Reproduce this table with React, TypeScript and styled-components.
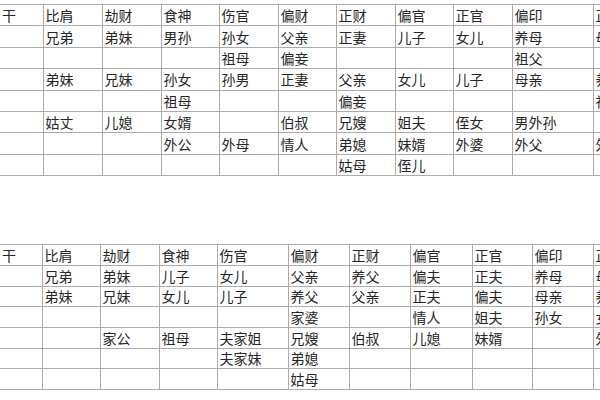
import styled, { createGlobalStyle } from 'styled-components'

const GlobalStyle = createGlobalStyle`
  html, body {
    margin: 0;
    padding: 0;
    background: #ffffff;
    overflow: hidden;
  }
`

const Page = styled.div`
  width: 600px;
  height: 400px;
  overflow: hidden;
  font-family: "Noto Sans CJK SC", "DejaVu Sans", sans-serif;
  color: #262626;
`

const Table = styled.table<{ $top: number; $rowH: number; $width: number }>`
  border-collapse: collapse;
  table-layout: fixed;
  width: ${p => p.$width}px;
  margin-top: ${p => p.$top}px;
  font-size: 14px;

  td {
    height: ${p => p.$rowH}px;
  }
`

const Col = styled.col<{ $w: number }>`
  width: ${p => p.$w}px;
`

const Cell = styled.td`
  border: 1px solid #ababab;
  border-left: none;
  padding: 0 0 0 2px;
  line-height: 1;
  white-space: nowrap;
  overflow: hidden;
  vertical-align: middle;

  & + & {
    border-left: 1px solid #ababab;
  }
`

const HEAD = ['干', '比肩', '劫财', '食神', '伤官', '偏财', '正财', '偏官', '正官', '偏印', '正印']

const TABLE_ONE = [
  HEAD,
  ['', '兄弟', '弟妹', '男孙', '孙女', '父亲', '正妻', '儿子', '女儿', '养母', '母亲'],
  ['', '', '', '', '祖母', '偏妾', '', '', '', '祖父', ''],
  ['', '弟妹', '兄妹', '孙女', '孙男', '正妻', '父亲', '女儿', '儿子', '母亲', '养母'],
  ['', '', '', '祖母', '', '', '偏妾', '', '', '', '祖父'],
  ['', '姑丈', '儿媳', '女婿', '', '伯叔', '兄嫂', '姐夫', '侄女', '男外孙', ''],
  ['', '', '', '外公', '外母', '情人', '弟媳', '妹婿', '外婆', '外父', '外公'],
  ['', '', '', '', '', '', '姑母', '侄儿', '', '', ''],
]

const TABLE_TWO = [
  HEAD,
  ['', '兄弟', '弟妹', '儿子', '女儿', '父亲', '养父', '偏夫', '正夫', '养母', '母亲'],
  ['', '弟妹', '兄妹', '女儿', '儿子', '养父', '父亲', '正夫', '偏夫', '母亲', '养母'],
  ['', '', '', '', '', '家婆', '', '情人', '姐夫', '孙女', '女婿'],
  ['', '', '家公', '祖母', '夫家姐', '兄嫂', '伯叔', '儿媳', '妹婿', '', '外孙'],
  ['', '', '', '', '夫家妹', '弟媳', '', '', '', '', ''],
  ['', '', '', '', '', '姑母', '', '', '', '', ''],
]

const COLS_ONE = [43, 59, 59, 58, 59, 58, 59, 58, 59, 81, 7]
const COLS_TWO = [42, 58, 59, 58, 71, 61, 61, 62, 60, 61, 7]

function Grid({ rows, cols, top, rowH }: { rows: string[][]; cols: number[]; top: number; rowH: number }) {
  const width = cols.reduce((a, b) => a + b, 0)
  return (
    <Table $top={top} $rowH={rowH} $width={width}>
      <colgroup>
        {cols.map((w, i) => (
          <Col key={i} $w={w} />
        ))}
      </colgroup>
      <tbody>
        {rows.map((row, r) => (
          <tr key={r}>
            {row.map((text, c) => (
              <Cell key={c}>{text}</Cell>
            ))}
          </tr>
        ))}
      </tbody>
    </Table>
  )
}

export default function App() {
  return (
    <Page>
      <GlobalStyle />
      <Grid rows={TABLE_ONE} cols={COLS_ONE} top={4} rowH={20.4} />
      <Grid rows={TABLE_TWO} cols={COLS_TWO} top={68} rowH={19.7} />
    </Page>
  )
}
